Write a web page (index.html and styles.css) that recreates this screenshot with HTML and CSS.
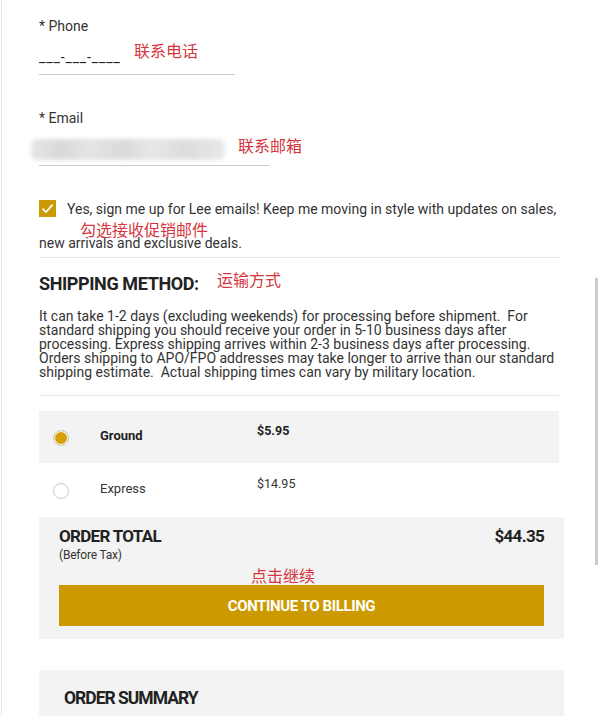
FILE: index.html
```html
<!DOCTYPE html>
<html lang="en">
<head>
<meta charset="utf-8">
<title>Checkout – Shipping</title>
<link rel="stylesheet" href="styles.css">
</head>
<body>
<div class="page">
  <div class="field">
    <div class="label">* Phone</div>
    <div class="input phone-input">___-___-____</div>
    <span class="note note-phone">联系电话</span>
  </div>

  <div class="field field-email">
    <div class="label">* Email</div>
    <div class="input email-input"><span class="blur"></span></div>
    <span class="note note-email">联系邮箱</span>
  </div>

  <div class="optin">
    <p class="optin-text"><span class="checkbox"><svg viewBox="0 0 17 17" width="17" height="17"><path d="M3.5 8.6 L7 12 L13.6 4.6" fill="none" stroke="#fff" stroke-width="1.6"/></svg></span>Yes, sign me up for Lee emails! Keep me moving in style with updates on sales, new arrivals and exclusive deals.</p>
    <span class="note note-optin">勾选接收促销邮件</span>
  </div>

  <div class="shipping">
    <h2 class="heading">SHIPPING METHOD:</h2>
    <span class="note note-ship">运输方式</span>
    <p class="info">It can take 1-2 days (excluding weekends) for processing before shipment.&nbsp; For standard shipping you should receive your order in 5-10 business days after processing. Express shipping arrives within 2-3 business days after processing. Orders shipping to APO/FPO addresses may take longer to arrive than our standard shipping estimate.&nbsp; Actual shipping times can vary by military location.</p>
  </div>

  <div class="methods">
    <div class="method selected">
      <span class="radio"></span>
      <span class="m-name">Ground</span>
      <span class="m-price">$5.95</span>
    </div>
    <div class="method">
      <span class="radio"></span>
      <span class="m-name">Express</span>
      <span class="m-price">$14.95</span>
    </div>
  </div>

  <div class="total-box">
    <div class="total-row">
      <div>
        <div class="total-title">ORDER TOTAL</div>
        <div class="total-sub">(Before Tax)</div>
      </div>
      <div class="total-amount">$44.35</div>
    </div>
    <div class="btn-wrap">
      <span class="note note-btn">点击继续</span>
      <button class="btn">CONTINUE TO BILLING</button>
    </div>
  </div>

  <div class="summary-box">
    <h2 class="summary-title">ORDER SUMMARY</h2>
  </div>

  <div class="scrollbar"></div>
</div>
</body>
</html>
```

FILE: styles.css
```css
* { box-sizing: border-box; }
html, body { margin: 0; padding: 0; background: #fff; }
body {
  font-family: Roboto, "Liberation Sans", sans-serif;
  color: #333;
  font-size: 14px;
  overflow: hidden;
}
.page {
  position: relative;
  margin-left: 1px;
  border-left: 1px solid #e8e8e8;
  padding-left: 37px;
  min-height: 716px;
}
.field { position: relative; padding-top: 17px; }
.field-email { padding-top: 34px; }
.label { line-height: 18px; font-size: 14px; color: #333; }
.input {
  padding: 13px 0 8px;
  line-height: 18px;
  border-bottom: 1px solid #c9c9c9;
  color: #222;
  font-size: 14px;
}
.phone-input { width: 196px; letter-spacing: 0.9px; }
.email-input { width: 230px; height: 39px; padding-top: 12px; }
.blur {
  display: block;
  margin-left: -8px;
  width: 194px;
  height: 21px;
  background: linear-gradient(90deg, #e6e6e6 0%, #d9d9d9 15%, #e4e4e4 30%, #dadada 48%, #e7e7e7 62%, #dcdcdc 80%, #e9e9e9 100%);
  filter: blur(2px);
  border-radius: 6px;
}
.note {
  position: absolute;
  font-family: "Noto Sans CJK SC", sans-serif;
  font-size: 16px;
  line-height: 20px;
  color: #d6353d;
  white-space: nowrap;
}
.note-phone { left: 95px; top: 40px; }
.note-email { left: 199px; top: 60px; }

.optin { position: relative; margin-top: 26px; width: 520px; }
.optin-text { margin: 0; line-height: 34px; font-size: 14px; color: #333; }
.checkbox {
  display: inline-block;
  width: 17px;
  height: 17px;
  background: #c99a06;
  vertical-align: -3px;
  margin-right: 11px;
}
.checkbox svg { display: block; }
.note-optin { left: 41px; top: 27px; }

.shipping {
  position: relative;
  width: 520px;
  margin-top: -3px;
  border-top: 1px solid #e6e6e6;
  border-bottom: 1px solid #e6e6e6;
  padding: 15px 0 16px;
}
.heading {
  margin: 0;
  font-size: 18px;
  line-height: 22px;
  font-weight: 700;
  color: #222;
  letter-spacing: -0.4px;
}
.note-ship { left: 178px; top: 11px; }
.info {
  margin: 14px 0 0;
  font-size: 14px;
  line-height: 14px;
  color: #333;
}

.methods { margin-top: 15px; width: 520px; }
.method {
  display: grid;
  grid-template-columns: 16px 31px 157px 1fr;
  padding-left: 14px;
  height: 53px;
  border-bottom: 1px solid #fff;
}
.method.selected { background: #f3f3f3; }
.radio {
  grid-column: 1;
  margin-top: 19px;
  width: 16px;
  height: 16px;
  border-radius: 50%;
  border: 1.5px solid #c8c8c8;
  background: #fff;
}
.method.selected .radio {
  background: #d4a006;
  box-shadow: inset 0 0 0 1px #fff;
  border-color: #cfcfcf;
}
.m-name { grid-column: 3; padding-top: 17px; line-height: 16px; font-size: 13px; color: #333; }
.m-price { grid-column: 4; padding-top: 12px; line-height: 16px; font-size: 12.5px; color: #333; }
.selected .m-name, .selected .m-price { font-weight: 700; color: #222; }

.total-box {
  background: #f3f3f3;
  width: 525px;
  padding: 9px 20px 13px;
}
.total-row { display: flex; justify-content: space-between; align-items: flex-start; }
.total-title, .total-amount {
  font-size: 17px;
  line-height: 20px;
  font-weight: 700;
  color: #222;
  letter-spacing: -0.7px;
}
.total-sub { font-size: 12px; line-height: 14px; margin-top: 2px; color: #333; letter-spacing: -0.2px; }
.btn-wrap { position: relative; margin-top: 23px; }
.note-btn { left: 192px; top: -20px; }
.btn {
  display: block;
  width: 100%;
  height: 41px;
  border: 0;
  background: #cc9a00;
  color: #fff;
  font-family: Roboto, "Liberation Sans", sans-serif;
  font-size: 15px;
  font-weight: 700;
  letter-spacing: -0.4px;
}
.summary-box {
  margin-top: 31px;
  background: #f3f3f3;
  width: 525px;
  height: 60px;
  padding: 17px 25px 0;
}
.summary-title {
  margin: 0;
  font-size: 17.5px;
  line-height: 22px;
  font-weight: 700;
  color: #222;
  letter-spacing: -1px;
}
.scrollbar {
  position: absolute;
  left: 593px;
  top: 278px;
  width: 3px;
  height: 287px;
  background: #cbcbcb;
}
```
